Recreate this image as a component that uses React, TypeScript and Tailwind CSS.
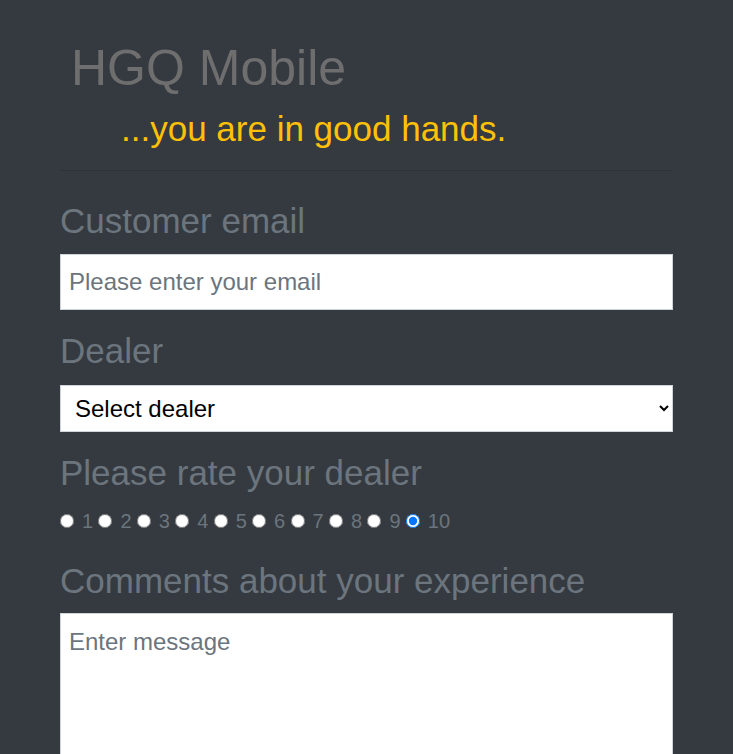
import { useState } from 'react';

const ratings = [1, 2, 3, 4, 5, 6, 7, 8, 9, 10];

export default function App() {
  const [rating, setRating] = useState(10);

  return (
    <div className="min-h-screen bg-[#343a40] font-['Liberation_Sans',Arial,sans-serif]">
      <div className="mx-auto w-[613px] pt-[38px]">
        {/* Header */}
        <h1 className="ml-[11px] text-[50px] leading-[60px] text-[#6e6e6e]">HGQ Mobile</h1>
        <h3 className="ml-[61px] mt-[10px] text-[35px] leading-[42px] text-[#ffc107]">
          ...you are in good hands.
        </h3>
        <hr className="mt-5 border-t border-[#2e3338]" />

        <form className="mt-[29px]" onSubmit={(e) => e.preventDefault()}>
          <label htmlFor="email" className="block text-[35px] leading-[42px] text-[#6c757d]">
            Customer email
          </label>
          <input
            id="email"
            type="email"
            placeholder="Please enter your email"
            className="mt-3 block h-[56px] w-full border border-[#ced4da] bg-white px-2 text-[24px] text-[#495057] outline-none placeholder:text-[#6c757d]"
          />

          <label htmlFor="dealer" className="mt-5 block text-[35px] leading-[42px] text-[#6c757d]">
            Dealer
          </label>
          <select
            id="dealer"
            defaultValue=""
            className="mt-[13px] block h-[47px] w-full border border-[#ced4da] bg-white pl-[10px] pr-1 text-[24px] text-black outline-none"
          >
            <option value="">Select dealer</option>
            <option value="1">HGQ Downtown</option>
            <option value="2">HGQ Northside</option>
          </select>

          <p className="mt-5 text-[35px] leading-[42px] text-[#6c757d]">Please rate your dealer</p>
          <div className="mt-[15px] flex h-6 items-center gap-[5.3px]">
            {ratings.map((n) => (
              <label key={n} className="flex items-center gap-2 text-[20px] leading-6 text-[#6c757d]">
                <input
                  type="radio"
                  name="rating"
                  value={n}
                  checked={rating === n}
                  onChange={() => setRating(n)}
                  className="m-0 h-[14px] w-[14px]"
                />
                {n}
              </label>
            ))}
          </div>

          <label htmlFor="comments" className="mt-[27px] block text-[35px] leading-[42px] text-[#6c757d]">
            Comments about your experience
          </label>
          <textarea
            id="comments"
            rows={6}
            placeholder="Enter message"
            className="mt-[11px] block w-full resize-none border border-[#ced4da] bg-white px-2 pt-[10px] text-[24px] leading-9 text-[#495057] outline-none placeholder:text-[#6c757d]"
          />
        </form>
      </div>
    </div>
  );
}
